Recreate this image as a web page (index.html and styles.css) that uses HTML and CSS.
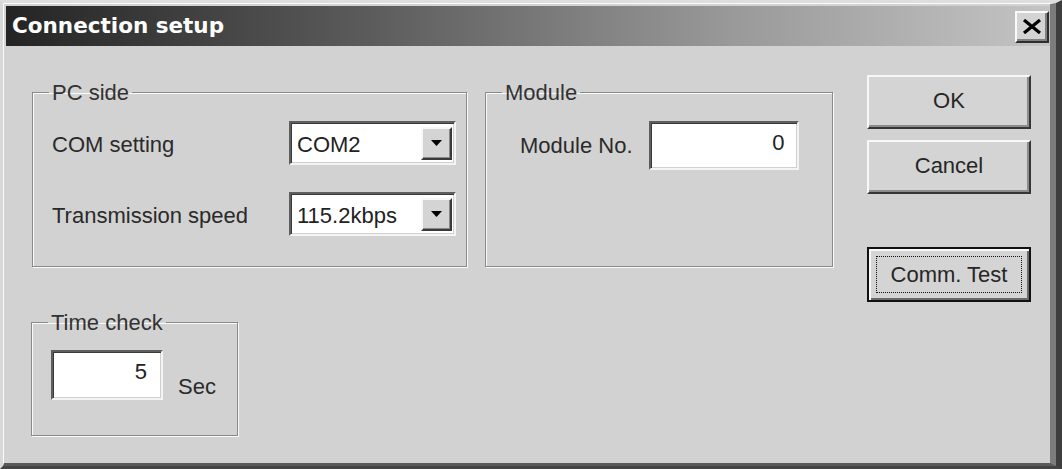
FILE: index.html
```html
<!DOCTYPE html>
<html>
<head>
<meta charset="utf-8">
<link rel="stylesheet" href="styles.css">
</head>
<body>
<div class="window">
  <div class="frame">
    <div class="titlebar">
      <span class="title">Connection setup</span>
      <span class="close"><svg width="20" height="15" viewBox="0 0 20 15"><path d="M2 1 L18 14 M18 1 L2 14" stroke="#000" stroke-width="3.2" fill="none"/></svg></span>
    </div>
    <div class="client">
      <div class="left-col">
        <fieldset class="group pc">
          <legend>PC side</legend>
          <div class="field-row">
            <span class="lbl">COM setting</span>
            <div class="combo"><span class="combo-val">COM2</span><span class="drop"><svg width="11" height="6" viewBox="0 0 11 6"><path d="M0 0 H11 L5.5 6 Z" fill="#000"/></svg></span></div>
          </div>
          <div class="field-row">
            <span class="lbl">Transmission speed</span>
            <div class="combo"><span class="combo-val">115.2kbps</span><span class="drop"><svg width="11" height="6" viewBox="0 0 11 6"><path d="M0 0 H11 L5.5 6 Z" fill="#000"/></svg></span></div>
          </div>
        </fieldset>
        <fieldset class="group time">
          <legend>Time check</legend>
          <div class="time-row">
            <div class="edit time-edit">5</div>
            <span class="lbl sec">Sec</span>
          </div>
        </fieldset>
      </div>
      <fieldset class="group module">
        <legend>Module</legend>
        <div class="module-row">
          <span class="lbl">Module No.</span>
          <div class="edit module-edit">0</div>
        </div>
      </fieldset>
      <div class="buttons">
        <div class="btn">OK</div>
        <div class="btn">Cancel</div>
        <div class="btn default"><span class="focus">Comm. Test</span></div>
      </div>
    </div>
  </div>
</div>
</body>
</html>
```
FILE: styles.css
```css
html, body {
  margin: 0;
  padding: 0;
  background: #d2d2d2;
}
body {
  font-family: "Liberation Sans", Arial, sans-serif;
  font-size: 22px;
  color: #262626;
}
.window {
  width: 1062px;
  height: 469px;
  box-sizing: border-box;
  border-style: solid;
  border-width: 3px 6px 3px 3px;
  border-color: #dedede #3e3e3e #444 #d8d8d8;
  background: #d2d2d2;
}
.frame {
  height: 100%;
  box-sizing: border-box;
  border-style: solid;
  border-width: 1px 6px 3px 1px;
  border-color: #fbfbfb #7c7c7c #5a5a5a #fbfbfb;
  padding: 2px 0 0 2px;
  display: flex;
  flex-direction: column;
}
.titlebar {
  height: 40px;
  flex: none;
  display: flex;
  align-items: center;
  justify-content: space-between;
  padding: 0 1px 0 6px;
  background: linear-gradient(to right, #242424 0%, #5c5c5c 35%, #9a9a9a 70%, #c4c4c4 100%);
}
.title {
  font-family: "DejaVu Sans", Verdana, sans-serif;
  font-weight: bold;
  font-size: 21.5px;
  color: #fff;
  margin-top: -1px;
}
.close {
  width: 34px;
  height: 32px;
  box-sizing: border-box;
  background: #d4d4d4;
  border-style: solid;
  border-width: 2px;
  border-color: #fafafa #2e2e2e #2e2e2e #fafafa;
  box-shadow: inset -2px -2px 0 #808080;
  display: flex;
  align-items: center;
  justify-content: center;
  margin-top: 1px;
}
.client {
  flex: 1;
  display: flex;
  align-items: flex-start;
  padding: 29px 0 0 26px;
}
.left-col {
  display: flex;
  flex-direction: column;
  gap: 43px;
  margin-top: 5px;
}
.group {
  margin: 0;
  padding: 0 0 0 16px;
  min-inline-size: 0;
  box-sizing: border-box;
  border: 1px solid #8a8a8a;
  box-shadow: inset 1px 1px 0 #fafafa, 1px 1px 0 #fafafa;
}
.group legend {
  margin: 0;
  padding: 0 3px;
  line-height: 25px;
  font-size: 22px;
  color: #333;
}
.pc {
  width: 435px;
  height: 187px;
  padding-top: 16px;
  padding-right: 10px;
  display: flex;
  flex-direction: column;
  gap: 27px;
}
.field-row {
  display: flex;
  align-items: center;
  justify-content: space-between;
  margin-left: 3px;
}
.field-row .lbl {
  padding-top: 4px;
}
.lbl {
  color: #2a2a2a;
}
.combo {
  width: 167px;
  height: 44px;
  box-sizing: border-box;
  background: #fff;
  border-style: solid;
  border-width: 2px;
  border-color: #5e5e5e #f4f4f4 #f4f4f4 #5e5e5e;
  box-shadow: inset 1px 1px 0 #3a3a3a, inset -1px -1px 0 #d0d0d0;
  display: flex;
  align-items: center;
  justify-content: space-between;
  padding: 0 2px 0 6px;
}
.combo-val {
  color: #222;
  padding-top: 3px;
}
.drop {
  width: 31px;
  height: 33px;
  box-sizing: border-box;
  background: #d4d4d4;
  border-style: solid;
  border-width: 2px;
  border-color: #f8f8f8 #3a3a3a #3a3a3a #f8f8f8;
  box-shadow: inset -1px -1px 0 #888;
  display: flex;
  align-items: center;
  justify-content: center;
}
.time {
  width: 207px;
  height: 126px;
  margin-left: -1px;
  padding-top: 15px;
}
.time-row {
  display: flex;
  align-items: center;
  gap: 15px;
  margin-left: 3px;
}
.edit {
  box-sizing: border-box;
  background: #fff;
  border-style: solid;
  border-width: 2px;
  border-color: #5e5e5e #f4f4f4 #f4f4f4 #5e5e5e;
  box-shadow: inset 1px 1px 0 #3a3a3a, inset -1px -1px 0 #d0d0d0;
  text-align: right;
  color: #222;
}
.time-edit {
  width: 112px;
  height: 50px;
  padding: 7px 14px 0 0;
}
.sec {
  margin-top: 23px;
}
.module {
  width: 348px;
  height: 187px;
  margin-left: 18px;
  margin-top: 5px;
  padding-top: 16px;
}
.module-row {
  display: flex;
  align-items: center;
  gap: 16px;
  margin-left: 18px;
}
.module-edit {
  width: 150px;
  height: 49px;
  padding: 7px 12px 0 0;
}
.buttons {
  margin-left: 34px;
  width: 164px;
  display: flex;
  flex-direction: column;
}
.btn {
  height: 54px;
  box-sizing: border-box;
  background: #d4d4d4;
  border-style: solid;
  border-width: 2px;
  border-color: #f8f8f8 #363636 #363636 #f8f8f8;
  box-shadow: inset -2px -2px 0 #8c8c8c;
  display: flex;
  align-items: center;
  justify-content: center;
  color: #262626;
  padding-bottom: 2px;
}
.btn + .btn {
  margin-top: 11px;
}
.btn.default {
  margin-top: 53px;
  height: 55px;
  border: 2px solid #111;
  box-shadow: inset 2px 2px 0 #f8f8f8, inset -2px -2px 0 #6a6a6a;
  padding: 7px;
  align-items: stretch;
}
.focus {
  flex: 1;
  border: 1px dotted #111;
  display: flex;
  align-items: center;
  justify-content: center;
}
```
